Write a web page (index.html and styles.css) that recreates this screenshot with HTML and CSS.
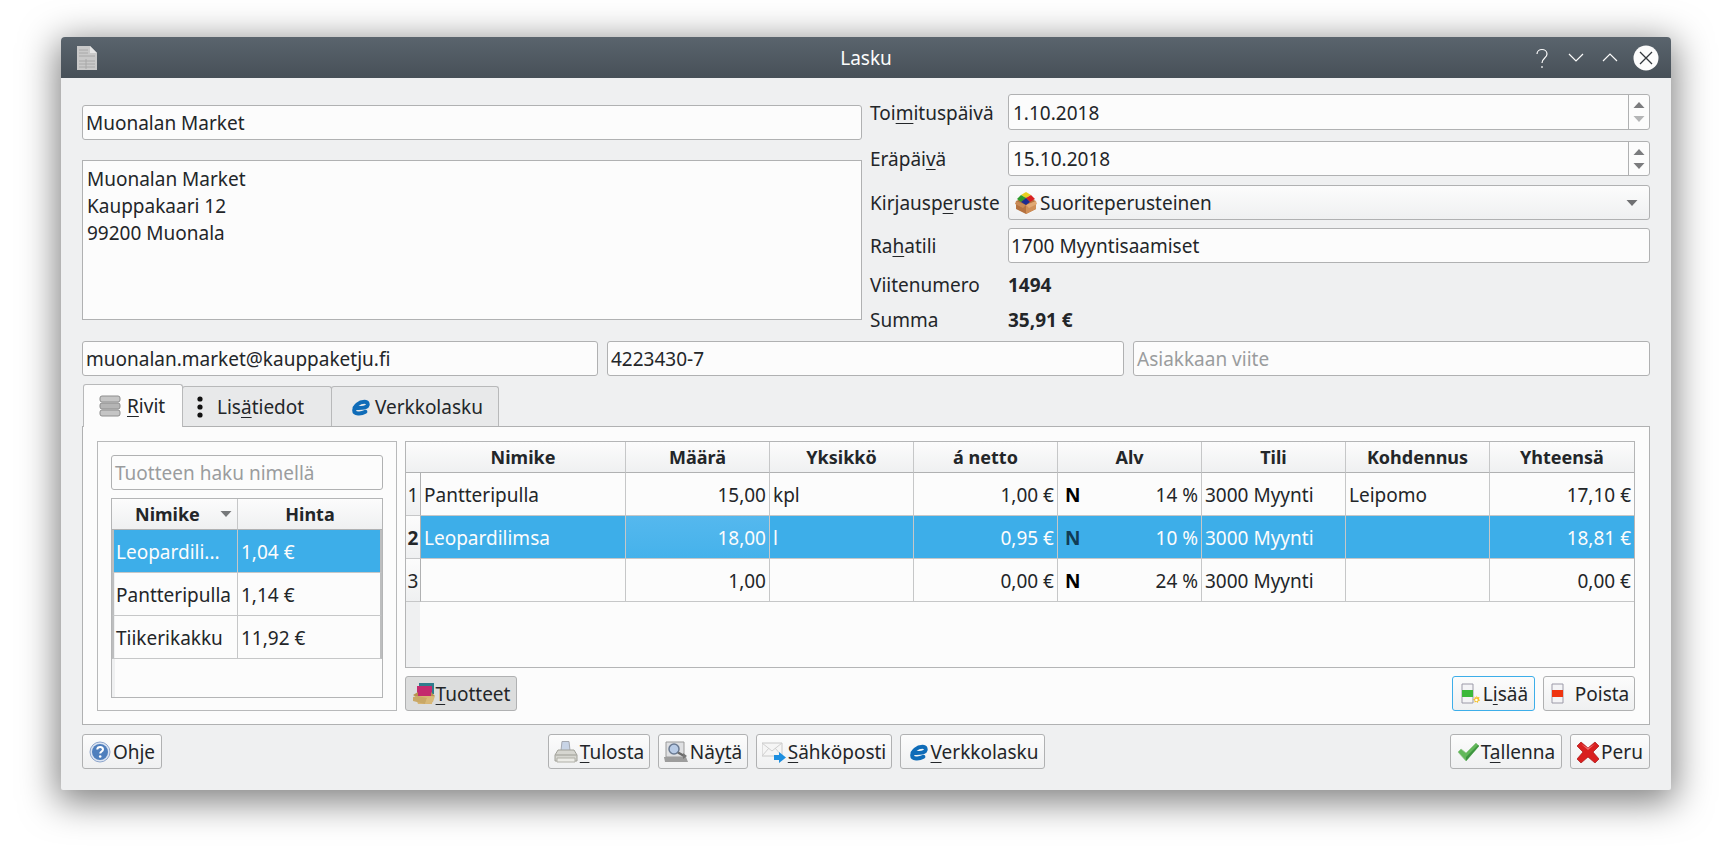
FILE: index.html
```html
<!DOCTYPE html>
<html lang="fi">
<head>
<meta charset="utf-8">
<title>Lasku</title>
<link rel="stylesheet" href="styles.css">
</head>
<body>
<svg class="defs" xmlns="http://www.w3.org/2000/svg">
  <symbol id="i-box" viewBox="0 0 22 22">
    <path d="M1 9 11 5l10 4v8l-10 5-10-5z" fill="#b5723f"/>
    <path d="M11 13v9l10-5V9z" fill="#d08f58"/>
    <path d="M1 9l10 4-3 3-8-4z" fill="#c98a55"/>
    <path d="M21 9l-10 4 3 3 8-4z" fill="#e0a873"/>
    <path d="M11 0l5 3-5 3-5-3z" fill="#e8d020"/>
    <path d="M6 3l5 3-5 4-4-3z" fill="#2e9a2a"/>
    <path d="M16 3l4 4-5 3-4-4z" fill="#d82020"/>
    <path d="M11 6l4 4-4 3-5-3z" fill="#1c2c90"/>
  </symbol>
  <symbol id="i-products" viewBox="0 0 24 24">
    <path d="M7 1h15v11H7z" fill="#2f7d8c"/>
    <path d="M5 4h15v11H5z" fill="#c42a6d"/>
    <path d="M1 13l5-3v6zM19 10l4 4-4 2z" fill="#b8924f"/>
    <path d="M3 14h18l-1 8H6z" fill="#d8b573"/>
    <path d="M1 15l5-1 9 2-2 6-12-3z" fill="#c9a866"/>
    <path d="M13 22l2-6 8-2-2 6z" fill="#d8b978"/>
  </symbol>
  <symbol id="i-rows" viewBox="0 0 22 22">
    <rect x="1" y="1" width="20" height="6" rx="2" fill="#c5c5c5" stroke="#8e8e8e"/>
    <rect x="1" y="8" width="20" height="6" rx="2" fill="#b5b5b5" stroke="#8e8e8e"/>
    <rect x="1" y="15" width="20" height="6" rx="2" fill="#c5c5c5" stroke="#8e8e8e"/>
  </symbol>
  <symbol id="i-dots" viewBox="0 0 22 22">
    <circle cx="11" cy="3" r="2.600" fill="#111"/>
    <circle cx="11" cy="11" r="2.600" fill="#111"/>
    <circle cx="11" cy="19" r="2.600" fill="#111"/>
  </symbol>
  <symbol id="i-e" viewBox="0 0 22 22">
    <path d="M5.500 11.800c5.500.4 10.800-.1 12.600-1.600 1.400-1.500.8-4.400-2.600-4.400-5.500 0-10.300 4.100-10.300 8.600 0 3.800 6.700 3.800 11.200 1.400" fill="none" stroke="#0f6cb8" stroke-width="4" stroke-linecap="round"/>
  </symbol>
  <symbol id="i-help" viewBox="0 0 22 22">
    <circle cx="11" cy="11" r="10" fill="#dbe4f2" stroke="#8ea6cc"/>
    <circle cx="11" cy="11" r="8" fill="#4f7fbd"/>
    <path d="M8.200 8.500c.3-3.500 5.800-3.300 5.800 0 0 2-2.800 2-2.800 4" fill="none" stroke="#fff" stroke-width="2"/>
    <circle cx="11.200" cy="15.500" r="1.300" fill="#fff"/>
  </symbol>
  <symbol id="i-print" viewBox="0 0 24 24">
    <path d="M8 1.500h7l1 9H7z" fill="#c8d4e6" stroke="#a4a8b0"/>
    <path d="M4 10h16l3 5v6H1v-6z" fill="#d6d6d0" stroke="#a0a098"/>
    <path d="M1.500 15h21" stroke="#9c9c94"/>
    <path d="M3 18h18v4H3z" fill="#ecece7" stroke="#b0b0a8"/>
  </symbol>
  <symbol id="i-view" viewBox="0 0 24 24">
    <path d="M2 2h18v15H2z" fill="#dfe0e2" stroke="#9a9a9a"/>
    <path d="M0 17h22l2 5H1z" fill="#9d9d9d"/>
    <circle cx="10" cy="9" r="5" fill="#b8cbe6" stroke="#6a7a92" stroke-width="1.500"/>
    <path d="M14 12.500l7 4" stroke="#6a6a6a" stroke-width="2.500"/>
    <path d="M19 13l4 3-4 3z" fill="#777"/>
  </symbol>
  <symbol id="i-mail" viewBox="0 0 24 24">
    <path d="M0 3h20v13H0z" fill="#f5f5f5" stroke="#c8c8c8"/>
    <path d="M0 3l10 8 10-8M0 16l7-8M20 16l-7-8" fill="none" stroke="#cfcfcf"/>
    <path d="M12 15h5v-3l7 5.500-7 5.500v-3h-5z" fill="#1d8fe0"/>
  </symbol>
  <symbol id="i-check" viewBox="0 0 22 22">
    <path d="M1 11l3-3 5 4L19 2l3 3L9 20z" fill="#62b85a" stroke="#8fc48a" stroke-width=".7"/>
    <path d="M9 20l13-15-1-1L9 16z" fill="#3d9440"/>
  </symbol>
  <symbol id="i-x" viewBox="0 0 22 22">
    <path d="M4 1l7 6 7-6 4 4-6 6 6 7-4 4-7-6-7 6-4-4 6-7-6-6z" fill="#d91f1f" stroke="#a81414" stroke-width=".7"/>
    <path d="M4 3l7 6 7-6-7 4z" fill="#ef6a6a"/>
  </symbol>
  <symbol id="i-add" viewBox="0 0 22 22">
    <path d="M3 1h11v19H3z" fill="#f4f4f6" stroke="#9c9aa8"/>
    <path d="M3 7h11v7H3z" fill="#3bb83a"/>
    <path d="M17.500 12.500l1 1.800 2-.3-.6 2 1.300 1.500-1.900.5-.4 2-1.500-1.300-1.800.9-.1-2-1.700-1.100 1.800-.9 0-2 1.700 1.100z" fill="#f5c12a"/>
    <circle cx="17.400" cy="17" r="1.300" fill="#fff"/>
  </symbol>
  <symbol id="i-del" viewBox="0 0 22 22">
    <path d="M3 1h11v19H3z" fill="#f4f4f6" stroke="#9c9aa8"/>
    <path d="M3 7h11v7H3z" fill="#ef3410"/>
  </symbol>
  <symbol id="i-doc" viewBox="0 0 22 26">
    <path d="M1 1h13l7 7v17H1z" fill="#c9c9c9"/>
    <path d="M14 1l7 7h-7z" fill="#e6e6e6"/>
    <path d="M3 5h9M3 8h9M3 11h16M3 16h16M3 19h16M3 22h16M10 14v10" stroke="#a8a8a8" fill="none"/>
  </symbol>
  <symbol id="i-tup" viewBox="0 0 12 8"><path d="M6 1l5.500 6H.5z" fill="currentColor"/></symbol>
  <symbol id="i-tdown" viewBox="0 0 12 8"><path d="M.5 1h11L6 7z" fill="currentColor"/></symbol>
</svg>

<main class="window">
  <header class="titlebar">
    <svg class="title-icon"><use href="#i-doc"/></svg>
    <span class="title-text">Lasku</span>
    <div class="title-buttons">
      <svg class="wb" viewBox="0 0 18 22"><path d="M4 7c0-6 10-6 10 0 0 4-5 4-5 9M9 19v2" fill="none" stroke="#fcfcfc" stroke-width="1.200"/></svg>
      <svg class="wb" viewBox="0 0 18 22"><path d="M2 7l7 7 7-7" fill="none" stroke="#fcfcfc" stroke-width="1.200"/></svg>
      <svg class="wb" viewBox="0 0 18 22"><path d="M2 14l7-7 7 7" fill="none" stroke="#fcfcfc" stroke-width="1.200"/></svg>
      <svg class="wb-close" viewBox="0 0 26 26"><circle cx="13" cy="13" r="12.500" fill="#fcfcfc"/><path d="M7 7l12 12M19 7L7 19" stroke="#31363b" stroke-width="1.300"/></svg>
    </div>
  </header>

  <div class="content">
    <section class="top">
      <div class="top-left">
        <div class="field name-field">Muonalan Market</div>
        <div class="address">Muonalan Market<br>Kauppakaari 12<br>99200 Muonala</div>
      </div>
      <div class="top-right">
        <div class="row r1">
          <label>Toi<u>m</u>ituspäivä</label>
          <div class="field date"><span>1.10.2018</span>
            <div class="spin"><svg class="up"><use href="#i-tup"/></svg><svg class="down off"><use href="#i-tdown"/></svg></div></div>
        </div>
        <div class="row r2">
          <label>Eräpäi<u>v</u>ä</label>
          <div class="field date"><span>15.10.2018</span>
            <div class="spin"><svg class="up"><use href="#i-tup"/></svg><svg class="down"><use href="#i-tdown"/></svg></div></div>
        </div>
        <div class="row r3">
          <label>Kirjausp<u>e</u>ruste</label>
          <div class="field combo"><svg class="ic22"><use href="#i-box"/></svg><span>Suoriteperusteinen</span><svg class="combo-arrow"><use href="#i-tdown"/></svg></div>
        </div>
        <div class="row r4">
          <label>Ra<u>h</u>atili</label>
          <div class="field">1700 Myyntisaamiset</div>
        </div>
        <div class="row r5"><label>Viitenumero</label><b class="value">1494</b></div>
        <div class="row r6"><label>Summa</label><b class="value">35,91 €</b></div>
      </div>
    </section>

    <section class="triple">
      <div class="field">muonalan.market@kauppaketju.fi</div>
      <div class="field">4223430-7</div>
      <div class="field placeholder">Asiakkaan viite</div>
    </section>

    <nav class="tabs">
      <div class="tab active tab-rivit"><svg class="ic22"><use href="#i-rows"/></svg><span><u>R</u>ivit</span></div>
      <div class="tab tab-lisa"><svg class="ic22"><use href="#i-dots"/></svg><span>Lis<u>ä</u>tiedot</span></div>
      <div class="tab tab-verkko"><svg class="ic22"><use href="#i-e"/></svg><span>Verkkolasku</span></div>
    </nav>

    <section class="panel">
      <aside class="search-box">
        <div class="field placeholder">Tuotteen haku nimellä</div>
        <div class="table-frame small-frame">
          <table class="small-table">
            <colgroup><col class="w-prod"><col></colgroup>
            <thead><tr><th><span class="sort-wrap">Nimike<svg class="sort"><use href="#i-tdown"/></svg></span></th><th>Hinta</th></tr></thead>
            <tbody>
              <tr class="sel"><td>Leopardili...</td><td>1,04 €</td></tr>
              <tr><td>Pantteripulla</td><td>1,14 €</td></tr>
              <tr><td>Tiikerikakku</td><td>11,92 €</td></tr>
            </tbody>
          </table>
        </div>
      </aside>
      <div class="lines">
        <div class="table-frame main-frame">
          <table class="main-table">
            <colgroup><col class="w-n"><col class="w-name"><col class="w-c"><col class="w-c"><col class="w-c"><col class="w-c"><col class="w-c"><col class="w-c"><col></colgroup>
            <thead><tr><th class="corner"></th><th>Nimike</th><th>Määrä</th><th>Yksikkö</th><th>á netto</th><th>Alv</th><th>Tili</th><th>Kohdennus</th><th>Yhteensä</th></tr></thead>
            <tbody>
              <tr><th class="n">1</th><td>Pantteripulla</td><td class="r">15,00</td><td>kpl</td><td class="r">1,00 €</td><td class="alv"><div><b>N</b><span>14 %</span></div></td><td>3000 Myynti</td><td>Leipomo</td><td class="r">17,10 €</td></tr>
              <tr class="sel"><th class="n cur">2</th><td>Leopardilimsa</td><td class="r current">18,00</td><td>l</td><td class="r">0,95 €</td><td class="alv"><div><b>N</b><span>10 %</span></div></td><td>3000 Myynti</td><td></td><td class="r">18,81 €</td></tr>
              <tr><th class="n">3</th><td></td><td class="r">1,00</td><td></td><td class="r">0,00 €</td><td class="alv"><div><b>N</b><span>24 %</span></div></td><td>3000 Myynti</td><td></td><td class="r">0,00 €</td></tr>
            </tbody>
          </table>
        </div>
        <div class="line-actions">
          <button class="btn pressed btn-prod"><svg class="ic24"><use href="#i-products"/></svg><span><u>T</u>uotteet</span></button>
          <div class="spacer"></div>
          <button class="btn focus btn-add"><svg class="ic22"><use href="#i-add"/></svg><span>L<u>i</u>sää</span></button>
          <button class="btn btn-del"><svg class="ic22"><use href="#i-del"/></svg><span>Poista</span></button>
        </div>
      </div>
    </section>

    <footer class="footer">
      <button class="btn w80"><svg class="ic22"><use href="#i-help"/></svg><span>Ohje</span></button>
      <div class="footer-center">
        <button class="btn w102"><svg class="ic24"><use href="#i-print"/></svg><span><u>T</u>ulosta</span></button>
        <button class="btn w90"><svg class="ic24"><use href="#i-view"/></svg><span>Näy<u>t</u>ä</span></button>
        <button class="btn w136"><svg class="ic24"><use href="#i-mail"/></svg><span><u>S</u>ähköposti</span></button>
        <button class="btn w145"><svg class="ic22"><use href="#i-e"/></svg><span><u>V</u>erkkolasku</span></button>
      </div>
      <div class="footer-right">
        <button class="btn w112"><svg class="ic22"><use href="#i-check"/></svg><span>T<u>a</u>llenna</span></button>
        <button class="btn w80"><svg class="ic22"><use href="#i-x"/></svg><span>Peru</span></button>
      </div>
    </footer>
  </div>
</main>
</body>
</html>
```

FILE: styles.css
```css
* { box-sizing: border-box; }
html, body { height: 100%; }
body {
  margin: 0;
  background: #fff;
  padding: 37px 61px 0 61px;
  overflow: hidden;
  font: 19px/24px "Noto Sans", sans-serif;
  color: #232629;
}
.defs { display: none; }
u { text-decoration: underline; text-decoration-thickness: 1px; text-underline-offset: 3px; text-decoration-skip-ink: none; }
svg { flex: none; display: block; }
.ic22 { width: 22px; height: 22px; }
.ic24 { width: 24px; height: 24px; }

.window {
  width: 1610px;
  height: 753px;
  background: #eff0f1;
  border-radius: 4px 4px 2px 2px;
  box-shadow: 0 8px 36px 4px rgba(0, 0, 0, .5);
  display: flex;
  flex-direction: column;
}
.titlebar {
  height: 41px;
  flex: none;
  border-radius: 4px 4px 0 0;
  background: linear-gradient(#5a646d, #475058);
  display: grid;
  grid-template-columns: 1fr auto 1fr;
  align-items: center;
  padding: 0 12px;
  color: #fcfcfc;
}
.title-icon { width: 22px; height: 26px; grid-column: 1; grid-row: 1; margin-left: 3px; }
.title-text { grid-column: 2; grid-row: 1; }
.title-buttons { grid-column: 3; grid-row: 1; justify-self: end; display: flex; align-items: center; gap: 16px; }
.wb { width: 18px; height: 22px; }
.wb-close { width: 26px; height: 26px; margin-left: -2px; }

.content { padding: 16px 21px 0; display: flex; flex-direction: column; }

.field {
  height: 35px;
  border: 1px solid #b0b1b2;
  border-radius: 3px;
  background: #fcfcfc;
  padding: 0 3px;
  display: flex;
  align-items: center;
  white-space: nowrap;
}
.placeholder { color: #9a9c9e; }

.top { display: grid; grid-template-columns: 780px 780px; gap: 8px; }
.top-left { padding-top: 11px; display: flex; flex-direction: column; gap: 20px; }
.address {
  height: 160px;
  border: 1px solid #b0b1b2;
  background: #fcfcfc;
  padding: 5px 4px;
  line-height: 27px;
}
.row { display: grid; grid-template-columns: 138px 1fr; align-items: center; }
.r1 { height: 36px; margin-bottom: 11px; }
.r1 .field { height: 36px; }
.r1 label, .r1 .date span { padding-top: 1px; }
.r2 { height: 35px; margin-bottom: 9px; }
.r3 { height: 35px; margin-bottom: 8px; }
.r4 { height: 35px; margin-bottom: 7px; }
.r4 .field { padding-left: 2px; }
.r5 { height: 30px; margin-bottom: 5px; }
.r6 { height: 30px; margin-bottom: 6px; }
.value { font-weight: 700; }

.date { padding: 0 0 0 4px; justify-content: space-between; }
.spin { width: 21px; height: 100%; border-left: 1px solid #b0b1b2; display: flex; flex-direction: column; align-items: center; justify-content: center; gap: 6px; color: #7b7c7e; }
.spin svg { width: 12px; height: 8px; }
.spin .off { color: #b4b5b6; }
.combo { background: linear-gradient(#fcfcfc, #eff0f1); padding: 0 11px 0 6px; gap: 3px; }
.combo span { flex: 1; }
.combo-arrow { width: 12px; height: 8px; color: #6f7072; }

.triple { display: grid; grid-template-columns: 516px 517px 517px; gap: 9px; }

.tabs { display: flex; margin-top: 8px; height: 43px; padding-left: 1px; }
.tab {
  display: flex;
  align-items: center;
  gap: 6px;
  height: 41px;
  margin-top: 2px;
  border: 1px solid #b8b9ba;
  border-bottom: 0;
  border-radius: 3px 3px 0 0;
  background: #e8e9ea;
}
.tab.active { height: 43px; margin-top: 0; background: #fcfcfc; position: relative; z-index: 1; }
.tab-rivit { width: 100px; padding-left: 15px; }
.tab-lisa { width: 150px; padding-left: 6px; margin-left: -1px; }
.tab-verkko { width: 168px; padding-left: 17px; gap: 4px; margin-left: -1px; }

.panel {
  height: 299px;
  margin-top: -1px;
  border: 1px solid #b0b1b2;
  background: #fcfcfc;
  padding: 14px 14px 13px;
  display: flex;
  gap: 8px;
}
.search-box {
  width: 300px;
  flex: none;
  border: 1px solid #b8b9ba;
  padding: 13px 13px 12px;
  display: flex;
  flex-direction: column;
  gap: 8px;
}
.table-frame { border: 1px solid #b4b5b6; background: #fcfcfc; }
.small-frame { height: 200px; background: linear-gradient(90deg, #eff0f1 3px, #fcfcfc 3px); }
.main-frame { height: 227px; background: linear-gradient(90deg, #eff0f1 14px, #fcfcfc 14px); }
table { border-collapse: separate; border-spacing: 0; table-layout: fixed; width: 100%; }
thead th {
  height: 31px;
  font-size: 18px;
  font-weight: 700;
  background: linear-gradient(#fcfcfc, #eff0f1);
  border-right: 1px solid #c6c7c8;
  border-bottom: 1px solid #b0b1b2;
  padding: 0;
  text-align: center;
}
thead th:last-child { border-right: 0; }
thead th.corner { border-right: 0; }
tbody td {
  height: 43px;
  border-right: 1px solid #c6c7c8;
  border-bottom: 1px solid #c6c7c8;
  padding: 1px 3px 0;
  white-space: nowrap;
  overflow: hidden;
}
tbody td:last-child { border-right: 0; }
.sel td { background: #3daee9; color: #fcfcfc; }
.r { text-align: right; }
.w-n { width: 15px; }
.w-name { width: 205px; }
.w-c { width: 144px; }
.w-prod { width: 126px; }
th.n {
  font-weight: 400;
  padding: 1px 0 0;
  text-align: center;
  background: linear-gradient(#fcfcfc, #eff0f1);
  border-right: 1px solid #b0b1b2;
  border-bottom: 1px solid #c6c7c8;
}
th.n.cur { font-weight: 700; }
.sel td.current { background: linear-gradient(#55b8ee, #45b2eb); }
tbody td.alv { padding-left: 7px; }
.alv div { display: flex; justify-content: space-between; }
.alv b { color: #000; }
.sel .alv b { color: #103c55; }

.small-table tbody td:first-child { border-left: 2px solid #bdbebf; padding-left: 2px; }
.small-table tbody td:last-child { border-right: 2px solid #bdbebf; }
.sort-wrap { display: flex; align-items: center; gap: 19px; padding-left: 23px; }
.sort { width: 14px; height: 8px; color: #76787a; }

.lines { flex: 1; min-width: 0; display: flex; flex-direction: column; }
.line-actions { display: flex; margin-top: 8px; gap: 8px; }
.spacer { flex: 1; }

.btn {
  height: 35px;
  display: flex;
  align-items: center;
  justify-content: center;
  gap: 2px;
  padding: 0;
  border: 1px solid #b0b1b2;
  border-radius: 3px;
  background: linear-gradient(#fcfcfc, #eff0f1);
  font: inherit;
  color: inherit;
  white-space: nowrap;
}
.w80 { width: 80px; }
.w90 { width: 90px; }
.w102 { width: 102px; }
.w112 { width: 112px; }
.w136 { width: 136px; }
.w145 { width: 145px; }
.pressed { background: #dcdddd; }
.focus { border-color: #3daee9; }
.btn-prod { width: 112px; gap: 0; }
.btn-add { width: 83px; }
.btn-del { width: 92px; gap: 4px; }

.footer { display: flex; justify-content: space-between; margin-top: 9px; }
.footer-center { margin-right: 19px; }
.footer-center, .footer-right { display: flex; gap: 8px; }
```
